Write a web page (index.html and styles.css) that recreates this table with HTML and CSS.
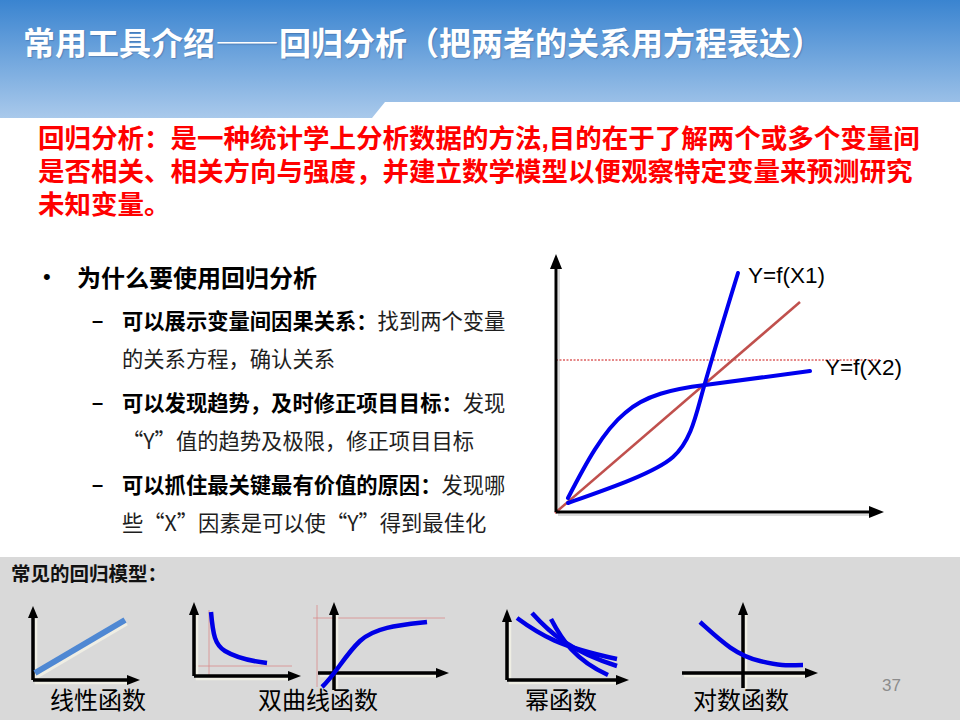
FILE: index.html
```html
<!DOCTYPE html>
<html lang="zh-CN">
<head>
<meta charset="utf-8">
<title>回归分析</title>
<link rel="stylesheet" href="styles.css">
</head>
<body>
<header class="header">
  <h1 class="title">常用工具介绍——回归分析（把两者的关系用方程表达）</h1>
</header>
<p class="definition">回归分析：是一种统计学上分析数据的方法,目的在于了解两个或多个变量间<br>是否相关、相关方向与强度，并建立数学模型以便观察特定变量来预测研究<br>未知变量。</p>
<main class="main">
  <section class="reasons">
    <div class="reasons-head"><span class="bullet">•</span><span>为什么要使用回归分析</span></div>
    <ul class="reasons-list">
      <li class="reason"><span class="dash">–</span><p class="reason-text"><b>可以展示变量间因果关系：</b>找到两个变量<br>的关系方程，确认关系</p></li>
      <li class="reason"><span class="dash">–</span><p class="reason-text"><b>可以发现趋势，及时修正项目目标：</b>发现<br>“Y”值的趋势及极限，修正项目目标</p></li>
      <li class="reason"><span class="dash">–</span><p class="reason-text"><b>可以抓住最关键最有价值的原因：</b>发现哪<br>些“X”因素是可以使“Y”得到最佳化</p></li>
    </ul>
  </section>
  <svg class="main-chart" width="370" height="280" viewBox="0 0 370 280">
    <path class="shadow" d="M14,22 V270 H326"/>
    <line class="dashed" x1="11" y1="115" x2="335" y2="115"/>
    <line class="diag" x1="10" y1="268" x2="255" y2="57"/>
    <path class="axis" d="M11,267 V22 M11,267 H326"/>
    <polygon class="arrow" points="11,9 5,24 17,24"/>
    <polygon class="arrow" points="339,267 324,261 324,273"/>
    <path class="curve" d="M23,258 C60,245 110,228 128,212 C146,196 151,170 158,145 C168,110 180,70 193,28"/>
    <path class="curve" d="M23,253 C40,220 58,186 80,168 C100,150 128,144 160,140 L265,126"/>
    <text class="chart-label" x="203" y="38">Y=f(X1)</text>
    <text class="chart-label" x="280" y="130">Y=f(X2)</text>
  </svg>
</main>
<section class="models">
  <h2 class="models-title">常见的回归模型：</h2>
  <div class="models-row">
    <figure class="model model-linear">
      <svg class="model-svg" width="140" height="100" viewBox="0 0 140 100">
        <path class="soft" d="M16,34 V98 H108"/>
        <line class="soft-line" x1="17" y1="92" x2="107" y2="39"/>
        <path class="axis-s" d="M13,95 V32 M13,95 H108"/>
        <polygon class="arrow" points="13,21 8,33 18,33"/>
        <polygon class="arrow" points="120,95 107,90 107,100"/>
        <line class="lin" x1="15" y1="88" x2="105" y2="35"/>
      </svg>
      <figcaption class="caption">线性函数</figcaption>
    </figure>
    <figure class="model model-hyper">
      <svg class="model-svg" width="270" height="100" viewBox="0 0 270 100">
        <path class="guide" d="M29,25 V91 M14,81 H112"/>
        <path class="soft" d="M17,30 V94 H109"/>
        <path class="axis-s" d="M14,91 V29 M14,91 H109"/>
        <polygon class="arrow" points="14,17 9,30 19,30"/>
        <polygon class="arrow" points="121,91 108,86 108,96"/>
        <path class="curve-s" d="M31,27 C33,50 35,60 45,66 S70,76 87,78"/>
        <path class="guide" d="M133,33 H265 M137,20 V102"/>
        <path class="soft" d="M157,30 V106 M140,91 H257"/>
        <path class="axis-s" d="M154,105 V29 M138,88 H257"/>
        <polygon class="arrow" points="154,17 149,30 159,30"/>
        <polygon class="arrow" points="269,88 256,83 256,93"/>
        <path class="curve-s" d="M142,102 C155,90 165,70 180,56 S220,40 247,37"/>
      </svg>
      <figcaption class="caption">双曲线函数</figcaption>
    </figure>
    <figure class="model model-power">
      <svg class="model-svg" width="140" height="100" viewBox="0 0 140 100">
        <path class="soft" d="M20,37 V98 H127"/>
        <path class="axis-s" d="M17,95 V36 M17,95 H127"/>
        <polygon class="arrow" points="17,24 12,37 22,37"/>
        <polygon class="arrow" points="139,95 126,90 126,100"/>
        <path class="curve-s" d="M27,33 C50,50 70,62 127,74"/>
        <path class="curve-s" d="M42,28 C60,48 80,66 127,81"/>
        <path class="curve-s" d="M61,34 C72,55 85,75 118,90"/>
      </svg>
      <figcaption class="caption">幂函数</figcaption>
    </figure>
    <figure class="model model-log">
      <svg class="model-svg" width="140" height="100" viewBox="0 0 140 100">
        <path class="soft" d="M66,30 V104 M4,91 H126"/>
        <path class="axis-s" d="M63,103 V29 M2,88 H126"/>
        <polygon class="arrow" points="63,17 58,30 68,30"/>
        <polygon class="arrow" points="138,88 125,83 125,93"/>
        <path class="curve-s" d="M20,37 C40,55 55,70 80,76 S110,80 123,80"/>
      </svg>
      <figcaption class="caption">对数函数</figcaption>
    </figure>
    <span class="pagenum">37</span>
  </div>
</section>
</body>
</html>
```
FILE: styles.css
```css
* { box-sizing: border-box; }
html, body { margin: 0; padding: 0; }
body {
  width: 960px;
  height: 720px;
  overflow: hidden;
  background: #ffffff;
  font-family: "Noto Sans CJK SC", "Noto Sans", sans-serif;
  color: #000;
}
.header {
  position: relative;
  height: 118px;
  background: linear-gradient(180deg, #3a84d0 0%, #a9c9eb 100%);
}
.header::after {
  content: "";
  position: absolute;
  left: 0;
  right: 0;
  bottom: 0;
  height: 16px;
  background: #ffffff;
  clip-path: polygon(372px 100%, 385px 0, 100% 0, 100% 100%);
}
.title {
  margin: 0;
  padding: 21px 0 0 23px;
  font-size: 32px;
  line-height: 40px;
  font-weight: 700;
  color: #ffffff;
  text-shadow: 1px 1px 1px rgba(40, 70, 120, 0.35);
  white-space: nowrap;
}
.definition {
  margin: 5px 0 0;
  padding-left: 38px;
  font-family: "Liberation Sans", "Noto Sans CJK SC", sans-serif;
  font-size: 26.5px;
  line-height: 33px;
  font-weight: 700;
  color: #ff0000;
  white-space: nowrap;
}
.main {
  display: flex;
  margin-top: 23px;
  height: 312px;
}
.reasons {
  width: 545px;
  padding-top: 14px;
}
.reasons-head {
  display: flex;
  align-items: center;
  font-size: 24px;
  line-height: 36px;
  font-weight: 700;
}
.bullet {
  width: 34px;
  margin-left: 43px;
  font-family: "Liberation Sans", sans-serif;
  font-size: 22px;
  font-weight: 400;
}
.reasons-list {
  list-style: none;
  margin: 3px 0 0;
  padding: 0;
}
.reason {
  display: flex;
  margin-top: 6px;
}
.dash {
  width: 30px;
  margin-left: 92px;
  font-family: "Liberation Sans", sans-serif;
  font-size: 20px;
  line-height: 38px;
  font-weight: 700;
}
.reason-text {
  margin: 0;
  font-size: 21.3px;
  line-height: 38px;
  color: #1e1e1e;
  white-space: nowrap;
}
.reason-text b {
  color: #000;
  font-weight: 700;
}
.main-chart { display: block; flex: none; }
.axis { fill: none; stroke: #000; stroke-width: 3; }
.shadow { fill: none; stroke: #dcdcdc; stroke-width: 2; }
.arrow { fill: #000; }
.dashed { stroke: #cc1010; stroke-width: 1; stroke-dasharray: 2 1.5; }
.diag { stroke: #c0504d; stroke-width: 2.5; }
.curve { fill: none; stroke: #0000ee; stroke-width: 4; stroke-linecap: round; }
.chart-label {
  font-family: "Liberation Sans", sans-serif;
  font-size: 22.5px;
  fill: #000;
}
.models {
  height: 163px;
  background: #d9d9d9;
  padding-top: 4px;
}
.models-title {
  margin: 0;
  padding-left: 11px;
  font-size: 19.5px;
  line-height: 24px;
  font-weight: 700;
  color: #111;
}
.models-row {
  display: flex;
  padding-left: 20px;
}
.model {
  margin: 0;
  display: flex;
  flex-direction: column;
  width: 140px;
}
.model-hyper { width: 270px; margin-left: 20px; }
.model-power { margin-left: 40px; }
.model-log { margin-left: 50px; }
.model-svg { display: block; overflow: visible; }
.caption {
  font-size: 24px;
  line-height: 28px;
  color: #000;
  white-space: nowrap;
}
.model-linear .caption { margin-left: 30px; }
.model-hyper .caption { margin-left: 78px; }
.model-power .caption { margin-left: 35px; }
.model-log .caption { margin-left: 13px; }
.axis-s { fill: none; stroke: #000; stroke-width: 3.5; }
.soft { fill: none; stroke: #efeee4; stroke-width: 2.5; }
.soft-line { stroke: #efeee4; stroke-width: 3; }
.guide { fill: none; stroke: #d98a8a; stroke-width: 0.8; }
.lin { stroke: #4f88d3; stroke-width: 6; }
.curve-s { fill: none; stroke: #0000e6; stroke-width: 4.5; }
.pagenum {
  margin-left: 62px;
  margin-top: 91px;
  height: 20px;
  font-family: "Liberation Sans", sans-serif;
  font-size: 17px;
  line-height: 20px;
  color: #8c8c8c;
}
```
